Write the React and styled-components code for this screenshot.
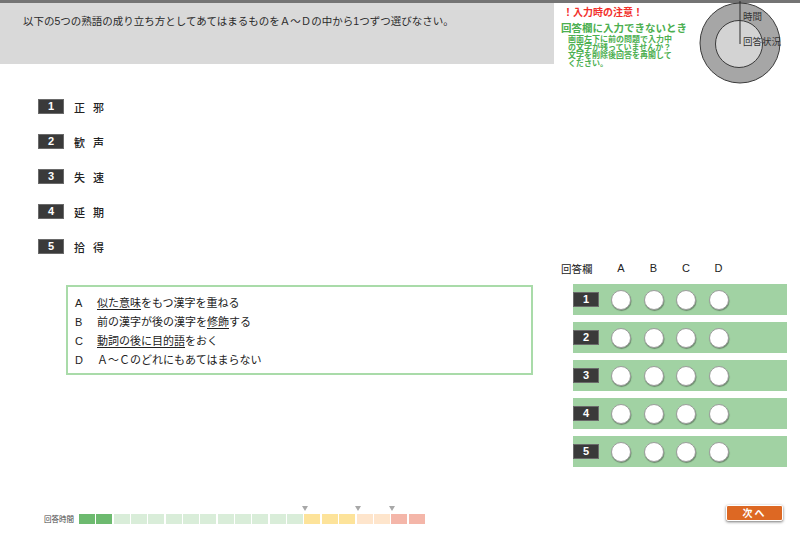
import React from "react";
import styled, { createGlobalStyle } from "styled-components";

const GlobalStyle = createGlobalStyle`
  html, body {
    margin: 0;
    padding: 0;
    background: #fff;
  }
  body {
    font-family: "Liberation Sans", "Noto Sans CJK JP", sans-serif;
    color: #333;
  }
  * {
    box-sizing: border-box;
  }
`;

const Page = styled.div`
  width: 800px;
  height: 534px;
  display: flex;
  flex-direction: column;
  overflow: hidden;
  background: #fff;
`;

const Header = styled.div`
  height: 65px;
  flex-shrink: 0;
  display: flex;
  align-items: flex-start;
  border-top: 3px solid #747474;
`;

const QuestionBar = styled.div`
  flex-shrink: 0;
  width: 554px;
  height: 61px;
  background: #d9d9d9;
  padding: 11px 23px 0;
  font-size: 10.5px;
  line-height: 14px;
  color: #2a2a2a;
`;

const Notice = styled.div`
  margin-left: 7px;
  padding-top: 3px;
  display: flex;
  flex-direction: column;
  white-space: nowrap;
`;

const NoticeTitle = styled.div`
  color: #f2302b;
  font-size: 10px;
  font-weight: bold;
  line-height: 14px;
  margin-left: 2px;
`;

const NoticeHead = styled.div`
  color: #4caf50;
  font-size: 10.5px;
  font-weight: bold;
  line-height: 16px;
  margin-top: 0;
`;

const NoticeBody = styled.div`
  color: #4caf50;
  font-size: 8px;
  line-height: 8px;
  font-weight: bold;
  margin-left: 7px;
  margin-top: 0;
`;

const Donut = styled.svg`
  position: relative;
  z-index: 1;
  flex-shrink: 0;
  width: 84px;
  height: 84px;
  margin-left: auto;
  margin-right: 18px;
  margin-top: -2px;
  overflow: visible;
`;

const Main = styled.div`
  flex: 1;
  display: flex;
`;

const LeftCol = styled.div`
  width: 545px;
  padding-top: 34px;
  padding-left: 38px;
`;

const WordList = styled.div`
  display: flex;
  flex-direction: column;
  gap: 20px;
`;

const WordRow = styled.div`
  display: flex;
  align-items: center;
  height: 15px;
`;

const NumBox = styled.div`
  width: 26px;
  height: 15px;
  background: #3a3a3a;
  border: 1px solid #6a6a6a;
  color: #fff;
  font-size: 11px;
  font-weight: bold;
  line-height: 13px;
  text-align: center;
  flex-shrink: 0;
`;

const Kanji = styled.span`
  font-family: "Noto Sans CJK JP", sans-serif;
  font-size: 11px;
  font-weight: 500;
  color: #222;
  margin-left: ${p => p.$first ? "10px" : "8px"};
`;

const OptionBox = styled.div`
  margin-top: 31px;
  margin-left: 28px;
  width: 467px;
  height: 90px;
  border: 2px solid #a9dba9;
  padding: 9px 0 0 7px;
  display: flex;
  flex-direction: column;
  gap: 3.6px;
`;

const OptionLine = styled.div`
  display: flex;
  font-size: 11px;
  line-height: 15.5px;
  color: #222;
`;

const OptionKey = styled.span`
  width: 22px;
  flex-shrink: 0;
`;

const Under = styled.span`
  text-decoration: underline;
  text-underline-offset: 2px;
`;

const RightCol = styled.div`
  padding-top: 196px;
  padding-left: 16px;
`;

const AnswerHead = styled.div`
  display: flex;
  align-items: center;
  height: 14px;
  font-size: 11px;
  color: #222;
  margin-bottom: 9px;
`;

const HeadLabel = styled.span`
  width: 50px;
  font-family: "Noto Sans CJK JP", sans-serif;
  font-size: 10.5px;
`;

const HeadLetter = styled.span`
  width: 20px;
  text-align: center;
  margin-right: 12.5px;
`;

const AnswerRows = styled.div`
  margin-left: 12px;
  display: flex;
  flex-direction: column;
  gap: 7px;
`;

const AnswerRow = styled.div`
  width: 214px;
  height: 31px;
  background: #a1d2a3;
  display: flex;
  align-items: center;
`;

const Choices = styled.div`
  display: flex;
  gap: 12.5px;
  margin-left: 12px;
`;

const Choice = styled.div`
  width: 20px;
  height: 20px;
  border-radius: 50%;
  background: #fff;
  border: 1px solid #9d9d9d;
  box-shadow: 0.5px 1px 1px rgba(0, 0, 0, 0.35);
`;

const Footer = styled.div`
  height: 29px;
  flex-shrink: 0;
  display: flex;
  align-items: flex-start;
  padding: 0 17px 0 44px;
`;

const TimeBar = styled.div`
  display: flex;
  align-items: center;
  margin-top: 8px;
`;

const TimeLabel = styled.span`
  font-family: "Noto Sans CJK JP", sans-serif;
  font-size: 7.5px;
  color: #444;
  width: 35px;
`;

const Cells = styled.div`
  display: flex;
  gap: 1.35px;
`;

const Cell = styled.div`
  position: relative;
  width: 16px;
  height: 10px;
  background: ${p => p.$color};
  &::before {
    content: "";
    display: ${p => p.$mark ? "block" : "none"};
    position: absolute;
    left: -2px;
    top: -8px;
    border-left: 3.5px solid transparent;
    border-right: 3.5px solid transparent;
    border-top: 5px solid #a8a8a8;
  }
`;

const NextButton = styled.button`
  margin-left: auto;
  width: 57px;
  height: 16px;
  padding: 0;
  background: #dd6823;
  border: 1px solid #fff;
  border-radius: 2px;
  box-shadow: 0 1px 3px rgba(0, 0, 0, 0.55);
  color: #fff;
  font-family: "Noto Sans CJK JP", sans-serif;
  font-size: 10px;
  font-weight: bold;
  line-height: 14px;
  letter-spacing: 2px;
`;

const words = [
  ["正", "邪"],
  ["歓", "声"],
  ["失", "速"],
  ["延", "期"],
  ["拾", "得"],
];

const cellColors = [
  "#6dba6f", "#6dba6f",
  "#d9edd9", "#d9edd9", "#d9edd9", "#d9edd9", "#d9edd9", "#d9edd9",
  "#d9edd9", "#d9edd9", "#d9edd9", "#d9edd9", "#d9edd9",
  "#fde39a", "#fde39a", "#fde39a",
  "#fee5cc", "#fee5cc",
  "#f4b6a9", "#f4b6a9",
];
const marks = [13, 16, 18];

export default function App() {
  return (
    <Page>
      <GlobalStyle />
      <Header>
        <QuestionBar>
          以下の5つの熟語の成り立ち方としてあてはまるものをＡ～Ｄの中から1つずつ選びなさい。
        </QuestionBar>
        <Notice>
          <NoticeTitle>！入力時の注意！</NoticeTitle>
          <NoticeHead>回答欄に入力できないとき</NoticeHead>
          <NoticeBody>
            画面左下に前の問題で入力中<br />
            の文字が残っていませんか？<br />
            文字を削除後回答を再開して<br />
            ください。
          </NoticeBody>
        </Notice>
        <Donut viewBox="0 0 84 84">
          <circle cx="42" cy="42" r="40" fill="#a6a6a6" stroke="#3a3a3a" strokeWidth="1" />
          <circle cx="41" cy="43" r="23.5" fill="#d3d3d3" stroke="#3a3a3a" strokeWidth="1" />
          <line x1="42" y1="0" x2="42" y2="43" stroke="#2a2a2a" strokeWidth="1" />
          <text x="45" y="19" fontSize="9.5" fill="#333" fontFamily="Noto Sans CJK JP, sans-serif">時間</text>
          <text x="45" y="44" fontSize="9.5" fill="#333" fontFamily="Noto Sans CJK JP, sans-serif">回答状況</text>
        </Donut>
      </Header>

      <Main>
        <LeftCol>
          <WordList>
            {words.map((w, i) => (
              <WordRow key={i}>
                <NumBox>{i + 1}</NumBox>
                <Kanji $first>{w[0]}</Kanji>
                <Kanji>{w[1]}</Kanji>
              </WordRow>
            ))}
          </WordList>
          <OptionBox>
            <OptionLine>
              <OptionKey>A</OptionKey>
              <span><Under>似た意味</Under>をもつ漢字を重ねる</span>
            </OptionLine>
            <OptionLine>
              <OptionKey>B</OptionKey>
              <span>前の漢字が後の漢字を<Under>修飾</Under>する</span>
            </OptionLine>
            <OptionLine>
              <OptionKey>C</OptionKey>
              <span><Under>動詞の後に目的語</Under>をおく</span>
            </OptionLine>
            <OptionLine>
              <OptionKey>D</OptionKey>
              <span>Ａ～Ｃのどれにもあてはまらない</span>
            </OptionLine>
          </OptionBox>
        </LeftCol>

        <RightCol>
          <AnswerHead>
            <HeadLabel>回答欄</HeadLabel>
            {["A", "B", "C", "D"].map(l => (
              <HeadLetter key={l}>{l}</HeadLetter>
            ))}
          </AnswerHead>
          <AnswerRows>
            {words.map((_, i) => (
              <AnswerRow key={i}>
                <NumBox>{i + 1}</NumBox>
                <Choices>
                  {["A", "B", "C", "D"].map(l => (
                    <Choice key={l} />
                  ))}
                </Choices>
              </AnswerRow>
            ))}
          </AnswerRows>
        </RightCol>
      </Main>

      <Footer>
        <TimeBar>
          <TimeLabel>回答時間</TimeLabel>
          <Cells>
            {cellColors.map((c, i) => (
              <Cell key={i} $color={c} $mark={marks.includes(i)} />
            ))}
          </Cells>
        </TimeBar>
        <NextButton type="button">次へ</NextButton>
      </Footer>
    </Page>
  );
}
